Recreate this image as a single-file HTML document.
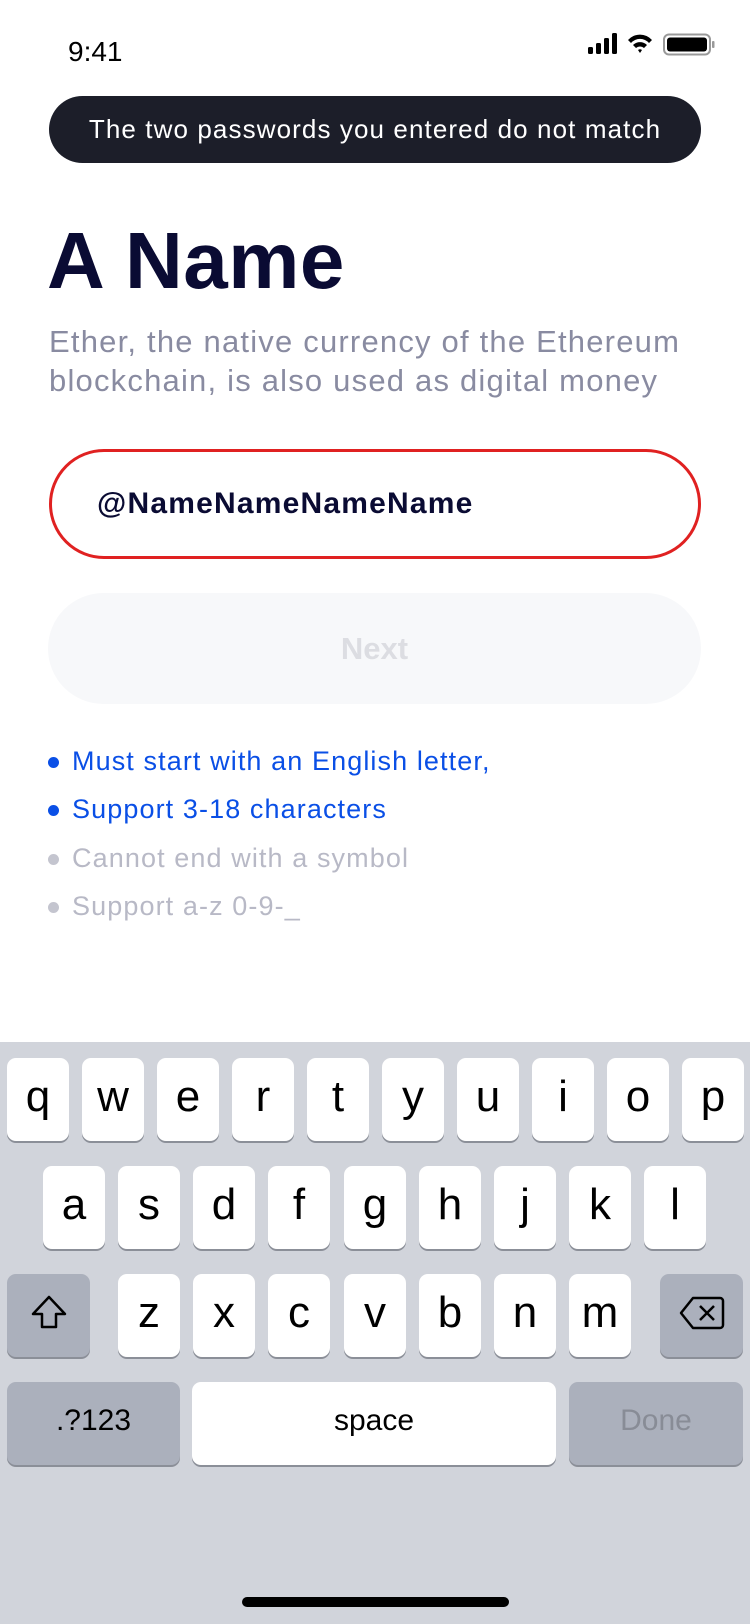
<!DOCTYPE html>
<html><head><meta charset="utf-8"><style>
*{margin:0;padding:0;box-sizing:border-box}
body{width:750px;height:1624px;position:relative;background:#fff;font-family:"Liberation Sans",sans-serif;overflow:hidden}
.a{position:absolute;white-space:nowrap}
.kb{position:absolute;left:0;top:1042px;width:750px;height:582px;background:#d1d4db}
.k{position:absolute;width:62px;height:83px;background:#fff;border-radius:9px;box-shadow:0 2px 0 #8b8f98;display:flex;align-items:center;justify-content:center;font-size:44px;color:#000;padding-bottom:6px}
.g{background:#abb0bc}
.dot{position:absolute;left:48px;width:11px;height:11px;border-radius:50%}
.b{font-size:27px;letter-spacing:1.1px}
</style></head><body>
<div class="a" style="left:68px;top:36px;font-size:28px;color:#000">9:41</div>
<svg class="a" style="left:588px;top:33px" width="135" height="24" viewBox="0 0 135 24">
<rect x="0" y="14" width="5" height="7" rx="1.5"/><rect x="8" y="10" width="5" height="11" rx="1.5"/><rect x="16" y="5" width="5" height="16" rx="1.5"/><rect x="24" y="0" width="5" height="21" rx="1.5"/>
<path d="M40 7 A16 16 0 0 1 64 7 L61 10 A12 12 0 0 0 43 10Z M45 12 A10 10 0 0 1 59 12 L56 15 A6 6 0 0 0 48 15Z M50 17 L52 20 L54 17 A3 3 0 0 0 50 17Z"/>
<rect x="76" y="1.5" width="46" height="20" rx="5" fill="none" stroke="#999" stroke-width="2"/><rect x="79" y="4.5" width="40" height="14" rx="3"/><rect x="124" y="8" width="2.5" height="7" rx="1" fill="#999"/>
</svg>
<div class="a" style="left:49px;top:96px;width:652px;height:67px;border-radius:34px;background:#1c1e29;color:#fff;font-size:26px;line-height:67px;text-align:center;letter-spacing:1.1px">The two passwords you entered do not match</div>
<div class="a" style="left:47px;top:216px;font-size:80px;font-weight:bold;color:#0a0b33;line-height:90px;letter-spacing:0.5px">A Name</div>
<div class="a" style="left:49px;top:322px;font-size:31px;line-height:39px;color:#898ba1;letter-spacing:1.2px">Ether, the native currency of the Ethereum<br>blockchain, is also used as digital money</div>
<div class="a" style="left:49px;top:449px;width:652px;height:110px;border:3px solid #e02121;border-radius:55px"></div>
<div class="a" style="left:97px;top:487px;font-size:30px;font-weight:bold;color:#0a0b33;letter-spacing:1.2px">@NameNameNameName</div>
<div class="a" style="left:48px;top:593px;width:653px;height:111px;border-radius:56px;background:#f7f8fa;color:#dcdde2;font-size:31px;font-weight:bold;line-height:111px;text-align:center">Next</div>
<div class="dot" style="top:757px;background:#0a4fe6"></div>
<div class="a b" style="left:72px;top:746px;color:#0a4fe6">Must start with an English letter,</div>
<div class="dot" style="top:805px;background:#0a4fe6"></div>
<div class="a b" style="left:72px;top:794px;color:#0a4fe6">Support 3-18 characters</div>
<div class="dot" style="top:854px;background:#c4c5cf"></div>
<div class="a b" style="left:72px;top:843px;color:#b8b9c6">Cannot end with a symbol</div>
<div class="dot" style="top:902px;background:#c4c5cf"></div>
<div class="a b" style="left:72px;top:891px;color:#b8b9c6">Support a-z 0-9-_</div>
<div class="kb">
<div class="k" style="left:7px;top:16px">q</div><div class="k" style="left:82px;top:16px">w</div><div class="k" style="left:157px;top:16px">e</div><div class="k" style="left:232px;top:16px">r</div><div class="k" style="left:307px;top:16px">t</div><div class="k" style="left:382px;top:16px">y</div><div class="k" style="left:457px;top:16px">u</div><div class="k" style="left:532px;top:16px">i</div><div class="k" style="left:607px;top:16px">o</div><div class="k" style="left:682px;top:16px">p</div>
<div class="k" style="left:43px;top:124px">a</div><div class="k" style="left:118px;top:124px">s</div><div class="k" style="left:193px;top:124px">d</div><div class="k" style="left:268px;top:124px">f</div><div class="k" style="left:344px;top:124px">g</div><div class="k" style="left:419px;top:124px">h</div><div class="k" style="left:494px;top:124px">j</div><div class="k" style="left:569px;top:124px">k</div><div class="k" style="left:644px;top:124px">l</div>
<div class="k g" style="left:7px;top:232px;width:83px"><svg width="40" height="40" viewBox="0 0 40 40"><path d="M20 4 L36 21 H27 V34 H13 V21 H4 Z" fill="none" stroke="#000" stroke-width="2.5" stroke-linejoin="round"/></svg></div>
<div class="k" style="left:118px;top:232px">z</div><div class="k" style="left:193px;top:232px">x</div><div class="k" style="left:268px;top:232px">c</div><div class="k" style="left:344px;top:232px">v</div><div class="k" style="left:419px;top:232px">b</div><div class="k" style="left:494px;top:232px">n</div><div class="k" style="left:569px;top:232px">m</div>
<div class="k g" style="left:660px;top:232px;width:83px"><svg width="46" height="36" viewBox="0 0 46 36"><path d="M14 3 H41 A3 3 0 0 1 44 6 V30 A3 3 0 0 1 41 33 H14 L2 18 Z" fill="none" stroke="#000" stroke-width="2.5" stroke-linejoin="round"/><path d="M21 11 L35 25 M35 11 L21 25" stroke="#000" stroke-width="2.5"/></svg></div>
<div class="k g" style="left:7px;top:340px;width:173px;font-size:30px">.?123</div>
<div class="k" style="left:192px;top:340px;width:364px;font-size:30px">space</div>
<div class="k g" style="left:569px;top:340px;width:174px;font-size:30px;color:#888c96">Done</div>
<div class="a" style="left:242px;top:555px;width:267px;height:10px;border-radius:5px;background:#000"></div>
</div>
</body></html>
